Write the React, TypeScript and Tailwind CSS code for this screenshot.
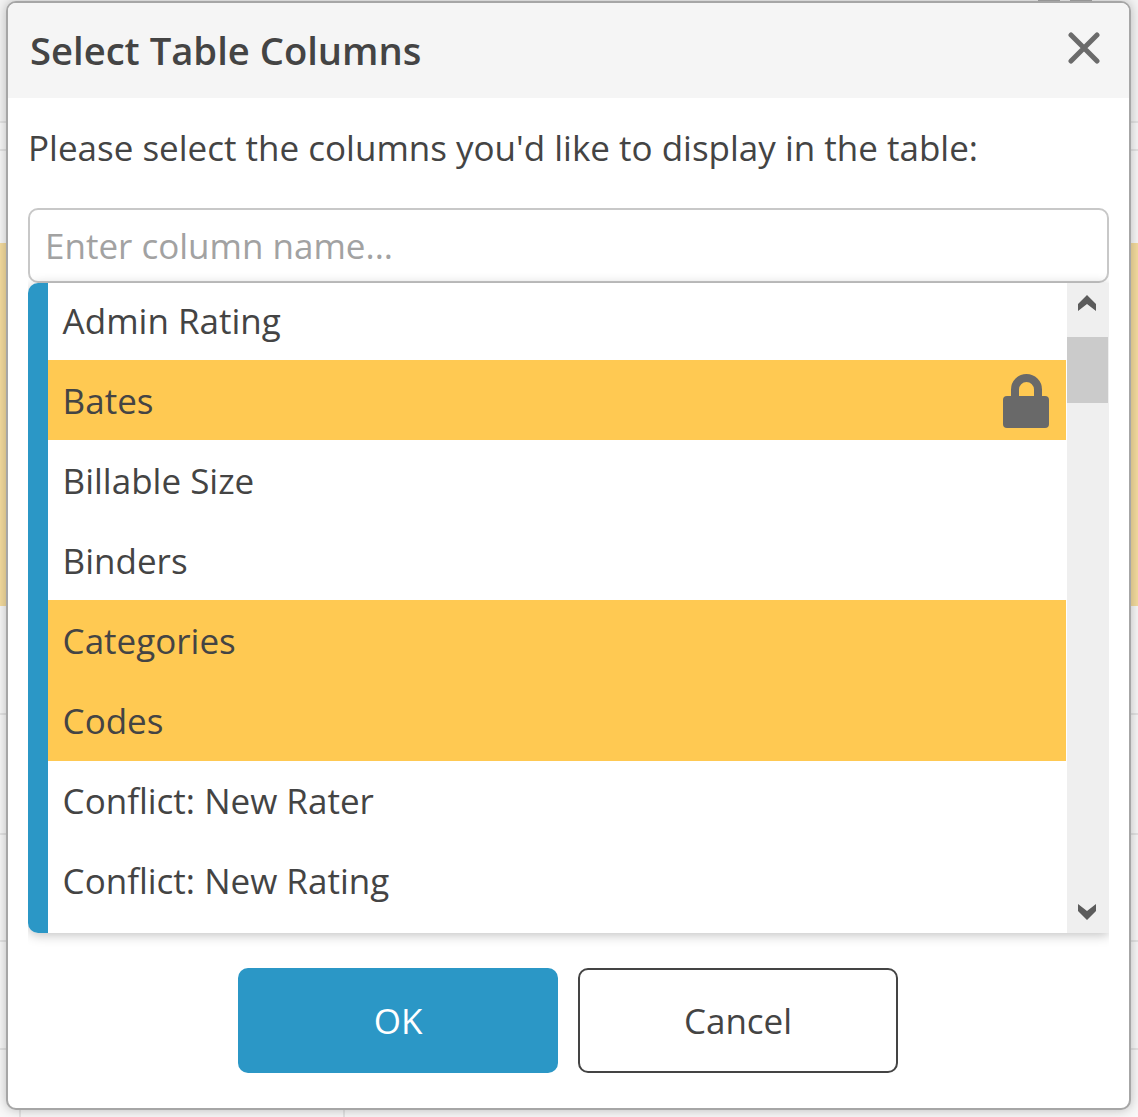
const columns = [
    { name: "Admin Rating", selected: false, height: "h-[77px]" },
    { name: "Bates", selected: true, locked: true, height: "h-[80px] pt-[2px]" },
    { name: "Billable Size", selected: false, height: "h-[80px] pt-[2px]" },
    { name: "Binders", selected: false, height: "h-[80px] pt-[2px]" },
    { name: "Categories", selected: true, height: "h-[80px] pt-[2px]" },
    { name: "Codes", selected: true, height: "h-[81px] pt-[1px]" },
    { name: "Conflict: New Rater", selected: false, height: "h-[80px]" },
    { name: "Conflict: New Rating", selected: false, height: "h-[80px]" },
];

const LockIcon = () => (
    <svg width="46" height="54" viewBox="0 0 46 54" className="absolute right-[17px] top-[14px]">
        <path d="M12 24 V15.5 a11.5 11.5 0 0 1 23 0 V24" fill="none" stroke="#696969" strokeWidth="8" />
        <rect x="0" y="22" width="46" height="32" rx="4" fill="#696969" />
    </svg>
);

const ArrowIcon = ({ down }: { down?: boolean }) => (
    <svg width="18" height="17" viewBox="0 0 18 17" className={down ? "rotate-180" : ""}>
        <path d="M9 0 L18 9 V16 L9 9 L0 16 V9 Z" fill="#5c5c5c" />
    </svg>
);

const CloseIcon = () => (
    <svg width="32" height="32" viewBox="0 0 32 32" className="absolute right-[29px] top-[29px]">
        <path d="M3 3 L29 29 M29 3 L3 29" stroke="#6b6b6b" strokeWidth="5" strokeLinecap="round" />
    </svg>
);

export default function App() {
    return (
        <div className="relative h-[1117px] w-[1138px] overflow-hidden bg-white font-['Open_Sans',sans-serif] text-[#444444]">
            {/* table behind the dialog */}
            <div className="flex h-full flex-col bg-[#f8f8f8]">
                <div className="h-[123px] border-b-2 border-[#e4e4e4] bg-[#f4f4f4]" />
                <div className="h-[28px] border-b-2 border-[#e4e4e4]" />
                <div className="h-[92px]" />
                <div className="h-[363px] bg-[#f5dc9e]" />
                <div className="h-[109px] border-b-2 border-[#e4e4e4]" />
                <div className="h-[120px] border-b-2 border-[#e4e4e4]" />
                <div className="h-[107px] border-b-2 border-[#e4e4e4]" />
                <div className="h-[108px] border-b-2 border-[#e4e4e4]" />
            </div>
            <div className="absolute left-[1038px] top-0 h-[2px] w-[22px] bg-[#aaaaaa]" />
            <div className="absolute left-[1070px] top-0 h-[2px] w-[22px] bg-[#aaaaaa]" />
            <div className="absolute bottom-0 left-[19px] h-[10px] w-[2px] bg-[#e4e4e4]" />
            <div className="absolute bottom-0 left-[343px] h-[10px] w-[2px] bg-[#e4e4e4]" />

            <div className="absolute left-[6px] top-[1px] flex h-[1109px] w-[1125px] flex-col overflow-hidden rounded-[10px] border-2 border-[#a6a6a6] bg-white shadow-[0_0_12px_rgba(0,0,0,0.25)]">
                <div className="relative flex h-[95px] items-center bg-[#f5f5f5] pl-[22px]">
                    <h1 className="text-[38.2px] leading-none font-semibold">Select Table Columns</h1>
                    <CloseIcon />
                </div>
                <div className="flex flex-1 flex-col px-[20px]">
                    <p className="mt-[27px] text-[35px] leading-[46px]">Please select the columns you'd like to display in the table:</p>
                    <input
                        readOnly
                        placeholder="Enter column name..."
                        className="mt-[37px] h-[75px] w-full rounded-[10px] border-2 border-[#c8c8c8] bg-white px-[15px] text-[35px] outline-none placeholder:text-[#a2a2a2]"
                    />
                    {/* clip box so the list shadow stops at the list edges */}
                    <div className="relative -mt-[10px] overflow-hidden pt-[10px] pb-[16px]">
                        <div className="flex h-[650px] overflow-hidden rounded-tl-[10px] rounded-bl-[10px] bg-white shadow-[0_2px_12px_rgba(0,0,0,0.25)]">
                            <div className="w-[20px] bg-[#2b97c6]" />
                            <ul className="flex-1">
                                {columns.map((column) => (
                                    <li
                                        key={column.name}
                                        className={`relative flex items-center pl-[14.6px] text-[35px] ${column.height} ${column.selected ? "bg-[#ffc952]" : ""}`}
                                    >
                                        {column.name}
                                        {column.locked && <LockIcon />}
                                    </li>
                                ))}
                            </ul>
                            <div className="relative ml-px flex w-[42px] flex-col justify-between bg-[#efefef] pt-[12px] pb-[13px] pl-[11px]">
                                <ArrowIcon />
                                <div className="absolute left-0 top-[54px] h-[66px] w-[41px] bg-[#cbcbcb]" />
                                <ArrowIcon down />
                            </div>
                        </div>
                    </div>
                    <div className="mt-[19px] flex justify-center gap-[20px] pr-px">
                        <button className="h-[105px] w-[320px] rounded-[10px] bg-[#2b97c6] pt-[2px] text-[35px] text-white">OK</button>
                        <button className="h-[105px] w-[320px] rounded-[10px] border-2 border-[#444444] bg-white pt-[2px] text-[35px]">Cancel</button>
                    </div>
                </div>
            </div>
        </div>
    );
}
